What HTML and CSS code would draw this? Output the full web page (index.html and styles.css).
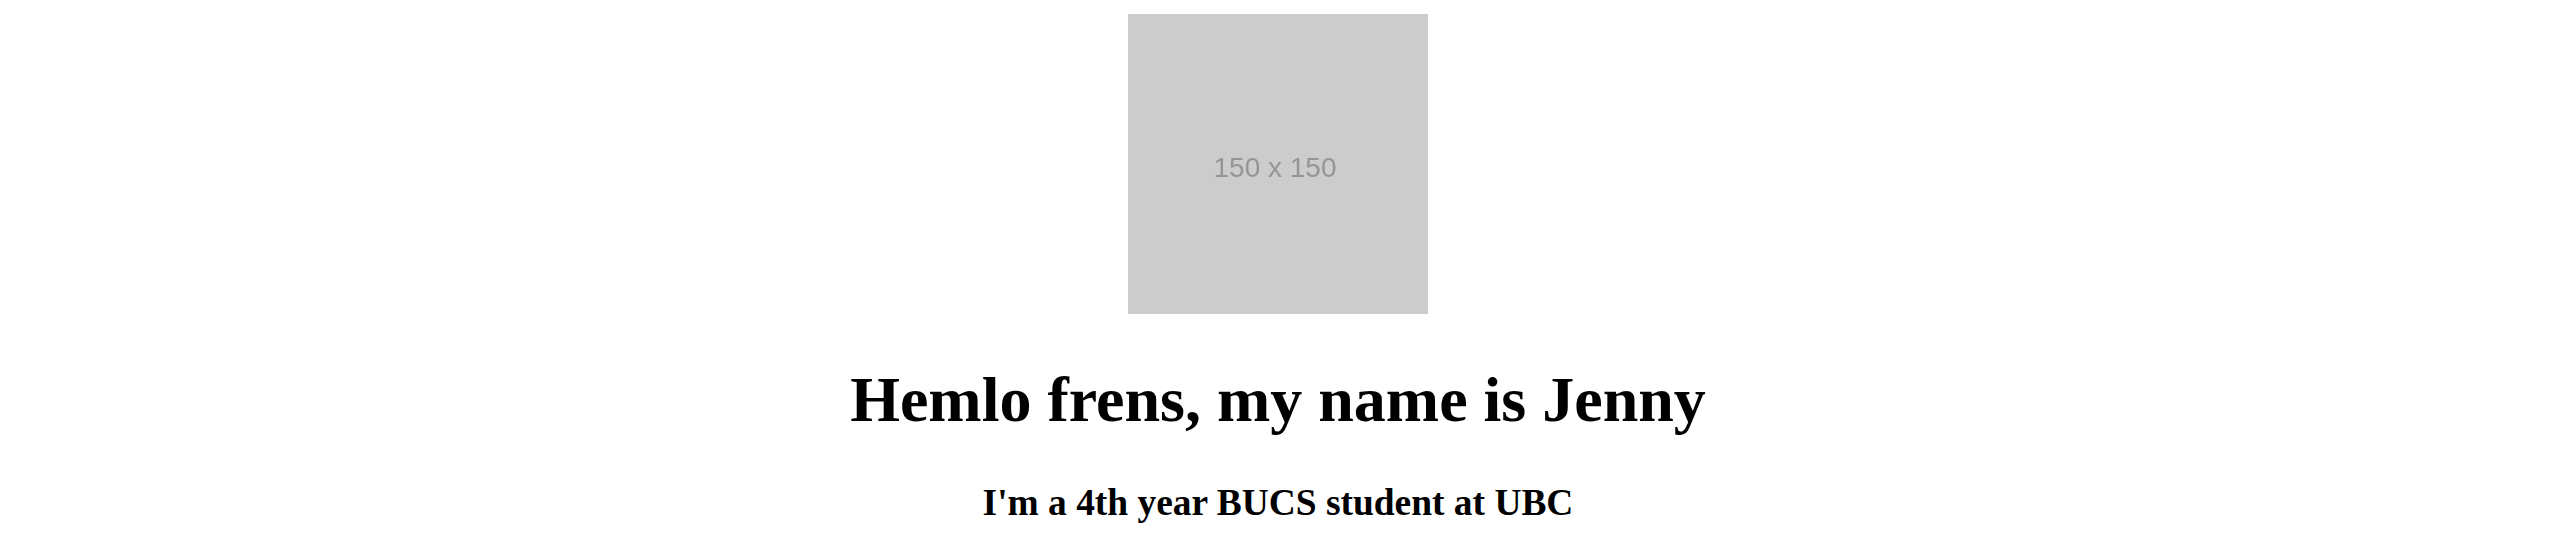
FILE: index.html
```html
<!DOCTYPE html>
<html>
<head>
<meta charset="utf-8">
<link rel="stylesheet" href="styles.css">
</head>
<body>
<main class="intro">
  <div class="avatar"><span class="avatar-label">150 x 150</span></div>
  <h1 class="title">Hemlo frens, my name is Jenny</h1>
  <h3 class="subtitle">I'm a 4th year BUCS student at UBC</h3>
</main>
</body>
</html>
```
FILE: styles.css
```css
html, body {
  margin: 0;
  padding: 0;
  background: #ffffff;
}
.intro {
  display: flex;
  flex-direction: column;
  align-items: center;
  padding-top: 14px;
  font-family: "Liberation Serif", "Times New Roman", serif;
  color: #000;
  text-align: center;
}
.avatar {
  width: 300px;
  height: 300px;
  background: #cccccc;
  display: flex;
  align-items: center;
  justify-content: center;
}
.avatar-label {
  font-family: "Liberation Sans", Arial, sans-serif;
  font-size: 28px;
  color: #959595;
  filter: blur(0.6px);
  margin-left: -6px;
  margin-top: 8px;
}
.title {
  margin: 49px 0 0;
  font-size: 64px;
  line-height: 74px;
  font-weight: bold;
}
.subtitle {
  margin: 44px 0 0;
  font-size: 37.44px;
  line-height: 43px;
  font-weight: bold;
}
```
